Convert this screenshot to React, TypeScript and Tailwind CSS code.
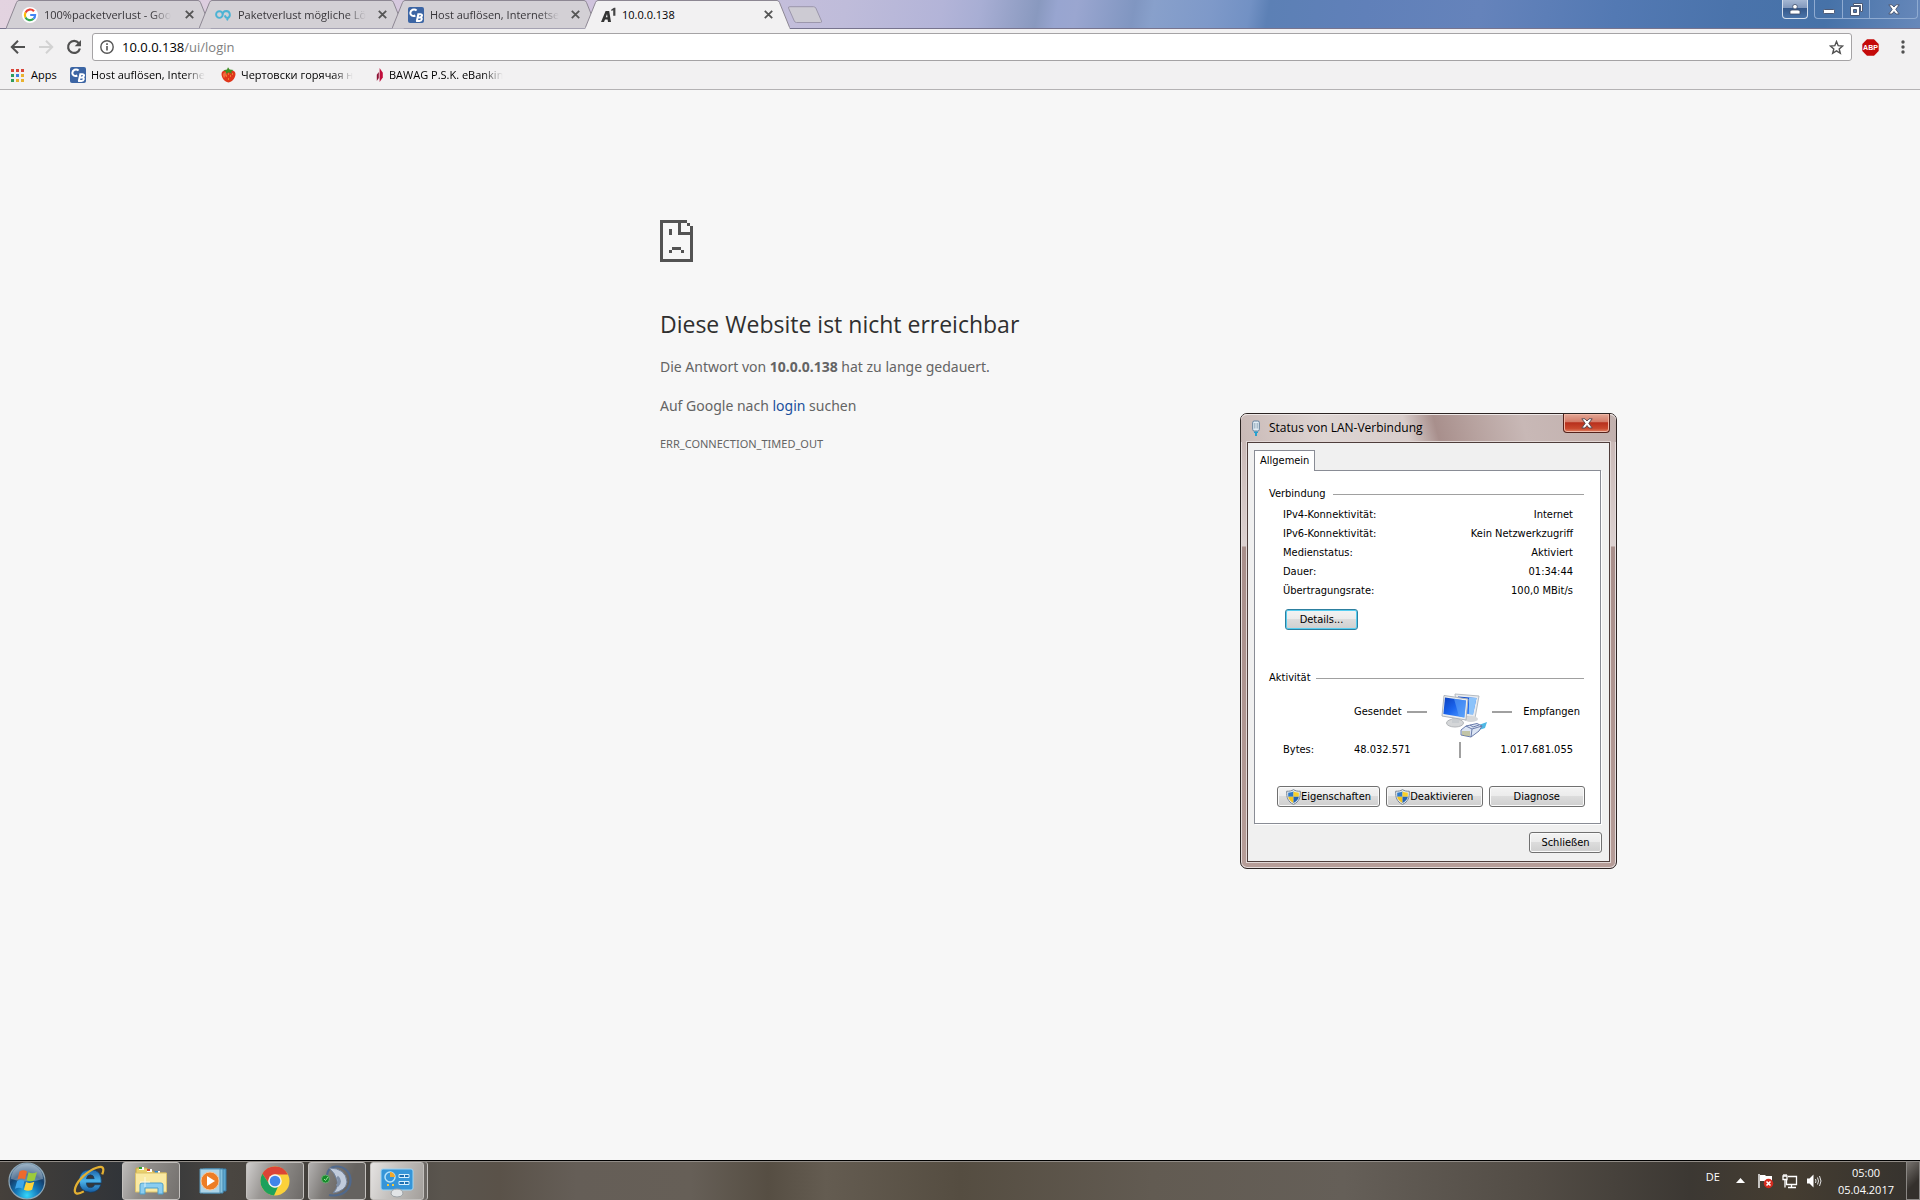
import type { ReactNode } from "react";
import clsx from "clsx";

function GoogleIcon() {
  return (
    <svg width="16" height="16" viewBox="0 0 16 16" className="shrink-0">
      <circle cx="8" cy="8" r="8" fill="#fff" />
      <g fill="none" strokeWidth="2.2">
        <path d="M12 4.2A5.1 5.1 0 0 0 3.5 5.6" stroke="#ea4335" />
        <path d="M3.5 5.6a5.2 5.2 0 0 0 0 4.8" stroke="#fbbc05" />
        <path d="M3.5 10.4a5.1 5.1 0 0 0 8 1.4" stroke="#34a853" />
        <path d="M11.5 11.8A5 5 0 0 0 13.1 8H8.2" stroke="#4285f4" />
      </g>
    </svg>
  );
}

function LoopIcon() {
  return (
    <svg width="17" height="16" viewBox="0 0 17 16" className="shrink-0" fill="none" stroke="#4bb3d4" strokeWidth="1.9">
      <circle cx="4.4" cy="7.6" r="3.3" />
      <path d="M7.7 7.6c0-2 1.4-3.6 3.7-3.6a3.7 3.7 0 0 1 1.2 7.1M9.8 8.4c.5 1.6 1.4 2.6 2.8 2.7M12 13.4l1-2.4-2.5-.7" />
    </svg>
  );
}

function CBIcon() {
  return (
    <svg width="16" height="16" viewBox="0 0 16 16" className="shrink-0">
      <rect width="16" height="16" rx="2" fill="#3c65a4" />
      <g fill="none" stroke="#fff" strokeWidth="2">
        <path d="M8.6 3.4C6 1.2 2.4 3 2.3 6c0 2.6 2.8 3.6 5 2.5" />
        <path d="M8.8 14.2 10.3 7.2h2.1c2.4 0 2 3-.3 3.2H9.8h2.5c2.4.2 1.7 3.5-.8 3.5H8" />
      </g>
    </svg>
  );
}

function A1Icon() {
  return (
    <svg width="15" height="16" viewBox="0 0 15 16" className="shrink-0">
      <path d="M0 15 4.6 4h3.6L10 15H7L6.6 12.4H4L3 15zM4.8 10.2h1.7L6 6.9z" fill="#333" fillRule="evenodd" />
      <path d="M10.3 2.6 13 .7h1.4v8h-2.2V3.2l-1.9.9z" fill="#444" />
    </svg>
  );
}

function StrawberryIcon() {
  return (
    <svg width="15" height="16" viewBox="0 0 15 16" className="shrink-0">
      <path d="M7.5 15.5C3 15 0 9.8.6 6.3 1 3.5 4 3 7.5 4c3.5-1 6.5-.5 6.9 2.3.6 3.5-2.4 8.7-6.9 9.2z" fill="#e0361b" />
      <path d="M2 7c1-2 3-2 4-1-1 3-2 4-3 5C2 9.5 1.7 8.5 2 7z" fill="#f2693c" />
      <path d="M2.3 3.2 6 2.6 7 .3l1.6 2.2 4 .6-2.4 1.7.6 2-3.2-1.5L4.8 7l.3-2.3z" fill="#3f8f24" />
      <path d="M5 9h1M9 9h1M7 12h1M11 7h1M7 7h1" stroke="#f9c23c" />
    </svg>
  );
}

function FlameIcon() {
  return (
    <svg width="8" height="14" viewBox="0 0 8 14" className="shrink-0">
      <path d="M3.6 0v14L6.8 9.4V4.8z" fill="#c00d3b" />
      <path d="M2.8 4v6L.8 13V6.8z" fill="#8d1034" />
    </svg>
  );
}

interface TabProps {
  icon: ReactNode;
  title: string;
  active?: boolean;
}

function BrowserTab({ icon, title, active }: TabProps) {
  return (
    <div className={clsx("relative -mr-3 flex h-[29px] w-[205px] shrink-0 items-center pr-[14px] pl-4", active && "z-10")}>
      <svg className="absolute inset-0 size-full" viewBox="0 0 205 29" preserveAspectRatio="none">
        <path
          d="M0 28.5 10.5 2.5Q11.3.5 13 .5H192Q193.7.5 194.5 2.5L205 28.5"
          fill={active ? "#f2f1f2" : "#d3d0d5"}
          stroke="#8d8793"
        />
        {active && <path d="M.5 28.5H204.5" stroke="#f2f1f2" strokeWidth="2" />}
      </svg>
      <button role="tab" aria-selected={!!active} className="relative flex flex-1 items-center gap-1.5 text-left">
        {icon}
        <span
          className={clsx(
            "text-[11px] leading-4 whitespace-nowrap",
            active ? "text-black" : "text-[#38363a] [mask-image:linear-gradient(to_right,black_85%,transparent)]",
          )}
        >
          {title}
        </span>
      </button>
      <button aria-label="Tab schließen" className="relative flex size-4 items-center justify-center">
        <svg width="9" height="9" viewBox="0 0 9 9" stroke="#555" strokeWidth="1.8">
          <path d="M.8.8l7.4 7.4M8.2.8.8 8.2" />
        </svg>
      </button>
    </div>
  );
}

function TitleBar() {
  return (
    <div className="flex h-[29px] items-start justify-between border-b border-[#77748e] bg-[linear-gradient(100deg,#e3d3e0_0%,#cfc3dd_32%,#bfbcda_44%,#b3b4d8_49%,#a8aed4_51%,#8999bf_54%,#98a5d0_55%,#9aa6d0_56%,#8096c1_59%,#88a0cb_60%,#7e99c9_63%,#7291c4_65%,#5c80b5_66%,#6080b9_71%,#6583bb_77%,#5379b3_84%,#4a73ab_90%,#4672a8_95%,#6788ba_100%)] pl-[6px]">
      <div role="tablist" className="flex">
        <BrowserTab icon={<GoogleIcon />} title="100%packetverlust - Goo" />
        <BrowserTab icon={<LoopIcon />} title="Paketverlust mögliche Lö" />
        <BrowserTab icon={<CBIcon />} title="Host auflösen, Internetse" />
        <BrowserTab icon={<A1Icon />} title="10.0.0.138" active />
        <button aria-label="Neuer Tab" className="ml-[9px] h-6 pt-1.5">
          <svg width="36" height="18" viewBox="0 0 36 18">
            <path d="M3 .7H26.5Q28 .7 28.8 2L34.5 15Q35 16.5 33.5 16.5H9.5Q8 16.5 7.3 15L1.5 2Q1 .7 3 .7z" fill="#cdcbd3" stroke="#9c97ac" />
          </svg>
        </button>
      </div>
      <div className="flex gap-[6px] pr-[2px]">
        <button aria-label="Profil" className="flex h-[19px] w-[26px] items-center justify-center rounded-b border border-t-0 border-[#d3deec] bg-[linear-gradient(#a5b7d3_0%,#8097bb_45%,#35588a_46%,#4a74a9_100%)]">
          <svg width="12" height="12" viewBox="0 0 12 12" fill="#fff" stroke="#3f4d68" strokeWidth=".8">
            <path d="M1 11V8.5Q1 7 3 7H9Q11 7 11 8.5V11z" />
            <circle cx="6" cy="3.7" r="2.3" />
          </svg>
        </button>
        <div className="flex h-[19px] overflow-hidden rounded-b border border-t-0 border-[#8fabd1]">
          <button aria-label="Minimieren" className="flex w-[28px] items-center justify-center border-r border-[#8fabd1]">
            <svg width="12" height="12" viewBox="0 0 12 12">
              <rect x=".5" y="6.5" width="11" height="4" rx=".8" fill="#fff" stroke="#4d5a75" />
            </svg>
          </button>
          <button aria-label="Wiederherstellen" className="flex w-[27px] items-center justify-center border-r border-[#8fabd1]">
            <svg width="13" height="13" viewBox="0 0 13 13" fill="#fff" stroke="#4d5a75">
              <path d="M3.5.5h9v8h-2v-6h-7z" />
              <path d="M.5 3.5h9v9h-9zM3.5 6.5v3h3v-3z" fillRule="evenodd" />
            </svg>
          </button>
          <button aria-label="Schließen" className="flex w-[47px] items-center justify-center">
            <svg width="12" height="11" viewBox="0 0 12 11">
              <path d="M.8.8H4L6 3 8 .8h3.2L7.8 5.3 11.2 10H8L6 7.6 4 10H.8l3.4-4.7z" fill="#fff" stroke="#4d5a75" />
            </svg>
          </button>
        </div>
      </div>
    </div>
  );
}

function Toolbar() {
  return (
    <div className="flex items-center bg-[#f2f1f2] pt-1 pr-[13px] pl-[10px]">
      <div className="flex w-[82px] items-center gap-3">
        <button aria-label="Zurück">
          <svg width="16" height="16" viewBox="0 0 16 16" fill="none" stroke="#505050" strokeWidth="2">
            <path d="M15 8H2.5M8 1.8 1.8 8 8 14.2" />
          </svg>
        </button>
        <button aria-label="Vorwärts">
          <svg width="16" height="16" viewBox="0 0 16 16" fill="none" stroke="#d2d2d2" strokeWidth="2">
            <path d="M1 8h12.5M8 1.8 14.2 8 8 14.2" />
          </svg>
        </button>
        <button aria-label="Neu laden">
          <svg width="16" height="16" viewBox="0 0 16 16">
            <path d="M12.8 4.2A6 6 0 1 0 13.9 9.5" fill="none" stroke="#505050" strokeWidth="2.2" />
            <path d="M15 1v6.3H8.7z" fill="#505050" />
          </svg>
        </button>
      </div>
      <div className="flex h-7 flex-1 items-center rounded-[3px] border border-[#a5a3a5] bg-white px-[7px]">
        <svg width="14" height="14" viewBox="0 0 14 14" className="shrink-0">
          <circle cx="7" cy="7" r="6.2" fill="none" stroke="#555" strokeWidth="1.4" />
          <path d="M7 6v4.5M7 3.3v1.6" stroke="#555" strokeWidth="1.6" />
        </svg>
        <div className="relative ml-2 flex-1 text-[13px] leading-5">
          <input aria-label="Adresse" defaultValue="10.0.0.138/ui/login" className="w-full bg-transparent text-transparent outline-none" />
          <span aria-hidden className="pointer-events-none absolute inset-0 text-[#808080]">
            <span className="text-black">10.0.0.138</span>/ui/login
          </span>
        </div>
        <button aria-label="Lesezeichen">
          <svg width="15" height="15" viewBox="0 0 15 15" fill="none" stroke="#505050" strokeWidth="1.4">
            <path d="M7.5 1.5 9.2 5.7l4.4.3-3.4 2.9 1.1 4.4-3.8-2.4-3.8 2.4 1.1-4.4L1.4 6l4.4-.3z" />
          </svg>
        </button>
      </div>
      <button aria-label="Adblock Plus" className="ml-[10px]">
        <svg width="17" height="17" viewBox="0 0 17 17">
          <path d="M5 .3h7L16.7 5v7L12 16.7H5L.3 12V5z" fill="#c40a0a" />
          <text x="8.5" y="11" textAnchor="middle" fontSize="7" fontWeight="700" fill="#fff" fontFamily="Liberation Sans, sans-serif">ABP</text>
        </svg>
      </button>
      <button aria-label="Menü" className="ml-5">
        <svg width="8" height="16" viewBox="0 0 8 16" fill="#505050">
          <circle cx="4" cy="3" r="1.7" />
          <circle cx="4" cy="8" r="1.7" />
          <circle cx="4" cy="13" r="1.7" />
        </svg>
      </button>
    </div>
  );
}

const APP_DOTS = ["#d9453a", "#d9453a", "#d9453a", "#2f9c5c", "#3d7fe0", "#e9b22e", "#2f9c5c", "#e9b22e", "#e9b22e"];

function Bookmark({ icon, label }: { icon: ReactNode; label: string }) {
  return (
    <a href="#" className="flex w-[138px] shrink-0 items-center gap-[5px]">
      {icon}
      <span className="whitespace-nowrap [mask-image:linear-gradient(to_right,black_82%,transparent)]">{label}</span>
    </a>
  );
}

function BookmarkBar() {
  return (
    <nav className="flex h-[29px] items-center border-b border-[#b4b2b4] bg-[#f2f1f2] pl-[11px] text-[11px] leading-4 text-black">
      <a href="#" className="flex w-[59px] items-center gap-[7px]">
        <svg width="13" height="13" viewBox="0 0 13 13">
          {APP_DOTS.map((c, i) => (
            <rect key={i} x={(i % 3) * 5} y={Math.floor(i / 3) * 5} width="3" height="3" fill={c} />
          ))}
        </svg>
        Apps
      </a>
      <div className="flex gap-[13px]">
        <Bookmark icon={<CBIcon />} label="Host auflösen, Interne" />
        <Bookmark icon={<StrawberryIcon />} label="Чертовски горячая н" />
        <div className="flex pl-1">
          <Bookmark icon={<FlameIcon />} label="BAWAG P.S.K. eBankin" />
        </div>
      </div>
    </nav>
  );
}

function SadPage() {
  return (
    <svg width="33" height="42" viewBox="0 0 11 14" fill="#535353" shapeRendering="crispEdges">
      <path d="M0 0H9V1H7V4H10V2H11V14H0zM1 1V13H10V5H6V1z" fillRule="evenodd" />
      <path d="M9 1h1v1H9zM3 3h1v2H3zM4 9h3v1H4zM3 10h1v1H3zM7 10h1v1H7z" />
    </svg>
  );
}

function ErrorPage() {
  return (
    <main className="flex-1 bg-[#f7f7f7]">
      <div className="mx-auto w-[600px] pt-[130px] text-[#646464]">
        <SadPage />
        <h1 className="mt-[46px] text-[23px] leading-8 text-[#2f2f2f]">Diese Website ist nicht erreichbar</h1>
        <div className="font-['Noto_Sans',sans-serif]">
          <p className="mt-[17px] text-sm leading-5">
            Die Antwort von <strong>10.0.0.138</strong> hat zu lange gedauert.
          </p>
          <p className="mt-[19px] text-sm leading-5">
            Auf Google nach <a href="#" className="text-[#1a4f9c]">login</a> suchen
          </p>
          <p className="mt-5 text-[11px] leading-4">ERR_CONNECTION_TIMED_OUT</p>
        </div>
      </div>
    </main>
  );
}

function Shield() {
  return (
    <svg width="15" height="16" viewBox="0 0 15 16" className="shrink-0">
      <path d="M7.5.6C9.5 2 11.5 2.3 14.3 2.2c.3 6-1 10.5-6.8 13.2C1.7 12.7.4 8.2.7 2.2 3.5 2.3 5.5 2 7.5.6z" fill="#e4ebf2" stroke="#7b8794" />
      <path d="M7.5 2.3v5.5H2.2V3.7C4.3 3.7 6 3.3 7.5 2.3z" fill="#2f7ac8" />
      <path d="M7.5 2.3C9 3.3 10.7 3.7 12.8 3.7v4.1H7.5z" fill="#f7cf2c" />
      <path d="M2.2 7.8h5.3v6.1C4.5 12.5 2.7 10.5 2.2 7.8z" fill="#f2c420" />
      <path d="M7.5 7.8h5.3c-.5 2.7-2.3 4.7-5.3 6.1z" fill="#2563b2" />
    </svg>
  );
}

function WinButton({ children, className }: { children: ReactNode; className?: string }) {
  return (
    <button
      className={clsx(
        "flex h-[21px] items-center justify-center rounded-[3px] border bg-[linear-gradient(#f3f3f3_0%,#ebebeb_48%,#dcdcdc_50%,#cfcfcf_100%)]",
        className,
      )}
    >
      {children}
    </button>
  );
}

function NetworkIcon() {
  return (
    <svg width="47" height="46" viewBox="0 0 47 46" className="shrink-0">
      <defs>
        <linearGradient id="screen" x1="0" y1="0" x2="1" y2="1">
          <stop offset="0" stopColor="#0b3fbd" />
          <stop offset=".5" stopColor="#1b66ef" />
          <stop offset="1" stopColor="#5aa4ff" />
        </linearGradient>
      </defs>
      <path d="M14 1 38 3 34 25 16 22z" fill="#e9ecef" stroke="#b5bbc2" />
      <path d="M17 3.5 35.5 5 32 21.5 18 20z" fill="url(#screen)" />
      <path d="M28 4.5 35.5 5 32 21.5 28 21z" fill="#8cc3fa" />
      <ellipse cx="30" cy="26" rx="7" ry="3" fill="#d6d8da" />
      <ellipse cx="14" cy="30" rx="8.5" ry="4" fill="#d4d6d8" stroke="#b3b6b9" />
      <path d="M11 22h8l-1 8h-7z" fill="#c8ccd0" />
      <path d="M3 2.5 27 6 25 27 1 23z" fill="#eceef0" stroke="#adb4bc" />
      <path d="M4 4.5 25 7.5 23.4 24.6 2.4 21z" fill="url(#screen)" />
      <path d="M13 5.8 25 7.5 23.4 24.6 18 23.6z" fill="#5b9ff8" opacity=".65" />
      <path d="M35 33 46 29 44 35 38 37z" fill="#4fb8e5" />
      <path d="M20 37 25 33 36 30.5 41 33 38 38 30 44 20 42z" fill="#dce5f4" stroke="#6a7cab" />
      <path d="M25 33 31 36 30 44M31 36 41 33M29 32l3 2 6-2" fill="none" stroke="#6a7cab" />
      <path d="M22 38v4M24 38v5M26 38v5M28 38v5" stroke="#a8a45b" />
    </svg>
  );
}

const CONNECTION = [
  ["IPv4-Konnektivität:", "Internet"],
  ["IPv6-Konnektivität:", "Kein Netzwerkzugriff"],
  ["Medienstatus:", "Aktiviert"],
  ["Dauer:", "01:34:44"],
  ["Übertragungsrate:", "100,0 MBit/s"],
];

function GroupTitle({ children, className }: { children: ReactNode; className?: string }) {
  return (
    <div className={clsx("flex items-center", className)}>
      <h3>{children}</h3>
      <div className="h-px flex-1 bg-[#a0a0a0]" />
    </div>
  );
}

function StatusDialog() {
  return (
    <section
      role="dialog"
      aria-label="Status von LAN-Verbindung"
      className="absolute top-[413px] left-[1240px] w-[377px] rounded-[7px] border border-[#2c2423] bg-[linear-gradient(#c5b3b0_0px,#dcd1d0_132px,#a98f8b_133px,#b69d98_100%)] px-[6px] pb-[6px] shadow-[inset_0_0_0_1px_#e5dcdb]"
    >
      <header className="-mx-[6px] flex h-7 items-start rounded-t-[6px] bg-[linear-gradient(75deg,#c9b9b6_0%,#ded5d3_22%,#d8cdcb_44%,#a88f8c_52%,#b7a29f_62%,#c8b8b6_75%,#c1b0ad_100%)] pl-[11px] shadow-[inset_0_1px_#eee8e7]">
        <svg width="8" height="16" viewBox="0 0 8 16" className="mt-[6px]">
          <rect x=".7" y="1" width="6.6" height="10" rx="1.5" fill="#e3edf5" stroke="#62809c" />
          <path d="M2.5 3v5.5M4 3v5.5M5.5 3v5.5" stroke="#8fa6b8" strokeWidth=".7" />
          <path d="M2 11.5h4V13H2zM3 13h2v3H3z" fill="#26a0cf" />
        </svg>
        <h2 className="ml-[9px] flex-1 pt-[5px] text-xs leading-[18px] text-black">Status von LAN-Verbindung</h2>
        <button aria-label="Schließen" className="mr-[6px] flex h-[19px] w-[47px] items-center justify-center rounded-b-[4px] border border-t-0 border-[#54221b] bg-[linear-gradient(#e3a796_0%,#d37a66_45%,#b72f1c_48%,#c9482d_80%,#e08467_100%)] shadow-[inset_0_0_0_1px_#f0b7a6]">
          <svg width="12" height="11" viewBox="0 0 12 11">
            <path d="M.8.8H4L6 3 8 .8h3.2L7.8 5.3 11.2 10H8L6 7.6 4 10H.8l3.4-4.7z" fill="#fff" stroke="#5c4a50" />
          </svg>
        </button>
      </header>
      <div className="border border-[#4e3d3b] bg-[#f0f0f0] px-[6px] pt-[7px] pb-2 font-['DejaVu_Sans_Condensed','Noto_Sans',sans-serif] text-[11px] leading-[14px] text-black shadow-[0_0_0_1px_#e1d7d5]">
        <button role="tab" aria-selected className="relative -mb-px flex h-[21px] items-center border border-b-0 border-[#898c95] bg-white px-[5px]">
          Allgemein
        </button>
        <div className="mr-[2px] border border-[#898c95] bg-white pt-4 pr-4 pb-4 pl-[14px] shadow-[1px_1px_#fff]">
          <GroupTitle className="gap-[7px]">Verbindung</GroupTitle>
          <table className="mt-[4px] w-full">
            <tbody>
              {CONNECTION.map(([label, value]) => (
                <tr key={label} className="h-[19px]">
                  <th className="py-0 pl-[14px] text-left font-normal">{label}</th>
                  <td className="pr-[11px] text-right">{value}</td>
                </tr>
              ))}
            </tbody>
          </table>
          <WinButton className="mt-[9px] ml-4 w-[73px] border-[#2d7f9f] shadow-[inset_0_0_0_1px_#56cdf0]">Details...</WinButton>
          <GroupTitle className="mt-[41px] gap-[5px]">Aktivität</GroupTitle>
          <div className="mt-[6px] flex h-[46px] items-center pr-1 pb-1 pl-[85px]">
            <span className="w-[53px]">Gesendet</span>
            <div className="h-[2px] w-5 bg-[#a0a0a0]" />
            <div className="-mb-2 flex flex-1 justify-end pr-1">
              <NetworkIcon />
            </div>
            <div className="h-[2px] w-5 bg-[#a0a0a0]" />
            <span className="w-[68px] text-right">Empfangen</span>
          </div>
          <div className="mt-[5px] flex items-center pr-[11px] pl-[14px]">
            <span className="w-[71px]">Bytes:</span>
            <span className="w-[105px]">48.032.571</span>
            <div className="h-4 w-[2px] bg-[#a0a0a0]" />
            <span className="flex-1 text-right">1.017.681.055</span>
          </div>
          <div className="mt-7 -mr-px ml-[8px] flex gap-[6px]">
            <WinButton className="w-[103px] border-[#707070] shadow-[inset_0_0_0_1px_#fafafa]">
              <Shield />
              Eigenschaften
            </WinButton>
            <WinButton className="flex-1 border-[#707070] shadow-[inset_0_0_0_1px_#fafafa]">
              <Shield />
              Deaktivieren
            </WinButton>
            <WinButton className="flex-1 border-[#707070] shadow-[inset_0_0_0_1px_#fafafa]">Diagnose</WinButton>
          </div>
        </div>
        <div className="mt-2 mr-px flex justify-end">
          <WinButton className="w-[73px] border-[#707070] shadow-[inset_0_0_0_1px_#fafafa]">Schließen</WinButton>
        </div>
      </div>
    </section>
  );
}

function StartOrb() {
  return (
    <svg width="38" height="38" viewBox="0 0 38 38">
      <defs>
        <radialGradient id="orb" cx=".5" cy=".9" r=".9">
          <stop offset="0" stopColor="#35d6fa" />
          <stop offset=".35" stopColor="#1478ba" />
          <stop offset=".65" stopColor="#143f6c" />
          <stop offset="1" stopColor="#7f9db5" />
        </radialGradient>
      </defs>
      <circle cx="19" cy="19" r="18" fill="url(#orb)" stroke="#8fa8b8" strokeWidth="1.2" />
      <path d="M3 17a16 15 0 0 1 32 0Q19 22 3 17z" fill="#fff" opacity=".3" />
      <path d="M11.5 9.5q4-2.5 7.5 0l-2 8q-3.5-2.2-7.5 0z" fill="#ee6a2c" />
      <path d="M20.5 10.3q4 2 8.5-.3l-2.3 8q-4 2.3-8 .2z" fill="#9ccb3b" />
      <path d="M9 19.2q4-2.2 7.5.1l-2 7.5q-3.5-2-7.5 0z" fill="#3da5ea" />
      <path d="M18 20q4 2 8.3-.2l-2.2 7.9q-4 2.2-8.2 0z" fill="#ffd33a" />
    </svg>
  );
}

function InternetExplorerIcon() {
  return (
    <svg width="34" height="34" viewBox="0 0 36 34">
      <defs>
        <linearGradient id="ie" x1="0" y1="0" x2="0" y2="1">
          <stop offset="0" stopColor="#1b62a8" />
          <stop offset=".5" stopColor="#4db4ea" />
          <stop offset="1" stopColor="#145a9f" />
        </linearGradient>
      </defs>
      <path
        d="M30.5 21H24q-1 3-4.5 3-4 0-4.3-5H31q1-14-11.5-14Q8 5 7.5 17q.5 11.5 12 12 8.5 0 11-8zM15.3 14.5q.7-4 4.2-4t4 4z"
        fill="url(#ie)"
        fillRule="evenodd"
        stroke="#0f3c6b"
        strokeWidth=".7"
      />
      <path d="M32 10c3-8 0-9-6-7C17 6 6 16 3.5 24c-2 7 2 8 9 4" fill="none" stroke="#e3b032" strokeWidth="2.4" />
    </svg>
  );
}

function FolderIcon() {
  return (
    <svg width="34" height="30" viewBox="0 0 34 30">
      <path d="M2 2h11l2 3h4l1 2h12v18H2z" fill="#e9d06b" stroke="#c4a444" />
      <path d="M5 1h5v3H5zM13 3h5v3h-5zM21 5h5v3h-5z" fill="#fff" />
      <path d="M5 1h3v2H5z" fill="#2da32d" />
      <path d="M13 3h3v2h-3z" fill="#d2452c" />
      <path d="M21 5h3v2h-3z" fill="#2b8bd2" />
      <path d="M1.5 7h31v19h-31z" fill="#f9e9a3" stroke="#dcc26a" />
      <path d="M6 28V19q0-2 2-2h19q2 0 2 2v9h-5v-6H11v6z" fill="#8acdf0" stroke="#4d9fcb" />
      <path d="M11 11v10M6 16h10" stroke="#fff" opacity=".7" />
    </svg>
  );
}

function MediaIcon() {
  return (
    <svg width="28" height="28" viewBox="0 0 28 28">
      <path d="M6 2h21v22H6z" fill="#5ea8cf" stroke="#367da8" />
      <path d="M4 2h20v24H4z" fill="#86c4e0" stroke="#4689b1" />
      <path d="M1 2h20v24H1z" fill="#aed5e8" stroke="#5897b9" />
      <circle cx="11" cy="14" r="9" fill="#ed7d25" stroke="#f6c79c" />
      <path d="M8 9v10l8-5z" fill="#fff" />
    </svg>
  );
}

function ChromeIcon() {
  return (
    <svg width="30" height="30" viewBox="0 0 30 30">
      <circle cx="15" cy="15" r="14.5" fill="#fbd13a" />
      <path d="M2.4 7.8A14.5 14.5 0 0 1 27.9 8.5H15A6.5 6.5 0 0 0 9.4 18.2z" fill="#dc4436" />
      <path d="M2.4 7.8 9.4 18.2A6.5 6.5 0 0 0 18 20.7L14 29.5A14.5 14.5 0 0 1 2.4 7.8z" fill="#1da15c" />
      <circle cx="15" cy="15" r="6.8" fill="#f3f3f3" />
      <circle cx="15" cy="15" r="5.3" fill="#4285e9" />
    </svg>
  );
}

function TeamSpeakIcon() {
  return (
    <svg width="34" height="34" viewBox="0 0 34 34">
      <path d="M7 11Q8 3 16 2.5C34 2 36 27 18 31q-5 1-9 0" fill="none" stroke="#50698c" strokeWidth="2.2" />
      <path d="M9 4q17 0 18 14-1 9-14 11 6-6 4-13Q15 9 9 4z" fill="#c0cbdb" stroke="#71839d" />
      <path d="M17 13q5 4 0 9" fill="none" stroke="#8090a7" strokeWidth="3" />
      <circle cx="5.5" cy="15" r="4" fill="#168b2b" stroke="#69ac70" />
      <path d="m4 15 1.5 1.5L8 13" fill="none" stroke="#9be39b" />
    </svg>
  );
}

function ControlPanelIcon() {
  return (
    <svg width="34" height="30" viewBox="0 0 34 30">
      <rect x="1" y="1" width="32" height="21" rx="2" fill="#3595d8" stroke="#9fd4f2" />
      <circle cx="10" cy="9" r="5" fill="none" stroke="#b4e1fa" strokeWidth="1.5" />
      <path d="M10 9V4a5 5 0 0 1 5 5z" fill="#f3a92b" />
      <path d="M19 6.5h10v3H19zM19 13.5h10v3H19z" fill="#1c70b4" stroke="#d7f0fc" />
      <path d="M24.5 6.5v3M24.5 13.5v3" stroke="#d7f0fc" />
      <path d="M7 16h2v2H7zM12 16h2v2h-2z" fill="#f5c93f" />
      <path d="M11 26q0-5 6-5t6 5q-1 3-6 3t-6-3z" fill="#e1e4e6" stroke="#9da3a7" />
    </svg>
  );
}

function TaskButton({ name, className, children }: { name: string; className: string; children: ReactNode }) {
  return (
    <button aria-label={name} className={clsx("flex h-[38px] items-center justify-center rounded-[3px] border border-[#c3c0bd]", className)}>
      {children}
    </button>
  );
}

function Taskbar() {
  return (
    <footer className="flex h-10 border-t border-black bg-[linear-gradient(90deg,#45403b_0%,#2f3338_7%,#4a4641_12%,#403d39_18%,#5a554e_23%,#5a5249_26%,#655e57_30%,#665f57_36%,#564e43_40%,#645c51_43%,#554d41_50%,#625b52_60%,#655f58_70%,#524c45_80%,#3c3833_88%,#453d31_93%,#35322e_100%)] shadow-[inset_0_1px_#918c87]">
      <div className="flex items-center">
        <button aria-label="Start" className="ml-2">
          <StartOrb />
        </button>
        <button aria-label="Internet Explorer" className="ml-[26px] w-[50px]">
          <InternetExplorerIcon />
        </button>
        <TaskButton name="Explorer" className="w-[58px] bg-[linear-gradient(110deg,#bdbbb9_0%,#8f8c89_40%,#73706d_100%)]">
          <FolderIcon />
        </TaskButton>
        <button aria-label="Media Player" className="flex w-[66px] justify-center">
          <MediaIcon />
        </button>
        <div className="flex gap-1">
          <TaskButton name="Chrome" className="w-[58px] bg-[linear-gradient(110deg,#cfcdcc_0%,#9a9794_35%,#6d6a67_100%)]">
            <ChromeIcon />
          </TaskButton>
          <TaskButton name="TeamSpeak" className="w-[58px] bg-[linear-gradient(110deg,#b3b1b0_0%,#7d7a77_35%,#65625f_70%)]">
            <TeamSpeakIcon />
          </TaskButton>
          <TaskButton name="Systemsteuerung" className="w-[54px] bg-[linear-gradient(110deg,#e5e3e2_0%,#c4c1be_45%,#a39f9b_100%)] pt-1 shadow-[3px_0_#6b6763,4px_0_#c3c0bd]">
            <ControlPanelIcon />
          </TaskButton>
        </div>
      </div>
      <div className="ml-auto flex items-center text-[11px] text-white">
        <span className="mr-4 pb-2 leading-4">DE</span>
        <button aria-label="Ausgeblendete Symbole" className="mr-[13px]">
          <svg width="9" height="5" viewBox="0 0 9 5">
            <path d="M0 5 4.5 0 9 5z" fill="#fff" />
          </svg>
        </button>
        <svg width="16" height="16" viewBox="0 0 16 16" className="mr-2">
          <path d="M1 1v14" stroke="#fff" strokeWidth="1.4" />
          <path d="M2 2h5l1 1h6v6H7L6 8H2z" fill="#fff" />
          <circle cx="10.5" cy="10.5" r="4.7" fill="#d52b1e" />
          <path d="m8.5 8.5 4 4m0-4-4 4" stroke="#fff" strokeWidth="1.6" />
        </svg>
        <svg width="16" height="16" viewBox="0 0 16 16" className="mr-2" fill="none" stroke="#fff" strokeWidth="1.3">
          <path d="M6 3.5h8.5v8H4.5V7M6 14.5h8M9.5 11.5v3" />
          <path d="M1 3h4v3.5H1zM2 1v2M4 1v2M3 6.5v8" />
        </svg>
        <svg width="16" height="16" viewBox="0 0 16 16" fill="none" stroke="#e3e3e3">
          <path d="M1 5.5h2.5L7.5 1.5v13L3.5 10.5H1z" fill="#fff" stroke="none" />
          <path d="M9.5 6q1 2 0 4M11.5 4.5q2 3.5 0 7M13.5 3q3 5 0 10" />
        </svg>
        <time className="mr-3 ml-4 text-center leading-[17px]">
          05:00
          <br />
          05.04.2017
        </time>
        <button aria-label="Desktop anzeigen" className="h-full w-[14px] border border-[#8a8784] bg-[linear-gradient(135deg,#77736f,#34302c_60%)]" />
      </div>
    </footer>
  );
}

export default function App() {
  return (
    <div className="relative flex min-h-screen flex-col font-['Open_Sans','Noto_Sans',sans-serif]">
      <TitleBar />
      <Toolbar />
      <BookmarkBar />
      <ErrorPage />
      <Taskbar />
      <StatusDialog />
    </div>
  );
}
